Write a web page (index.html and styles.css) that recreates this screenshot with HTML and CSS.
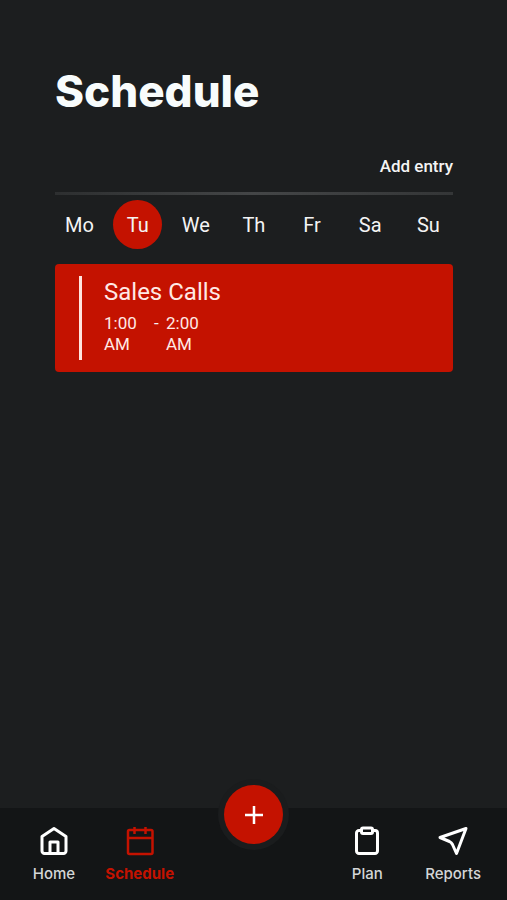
FILE: index.html
```html
<!DOCTYPE html>
<html lang="en">
<head>
<meta charset="utf-8">
<meta name="viewport" content="width=device-width, initial-scale=1">
<title>Schedule</title>
<link rel="stylesheet" href="styles.css">
</head>
<body>
<main class="page">
  <h1 class="title">Schedule</h1>
  <div class="actions"><button class="add-entry" type="button">Add entry</button></div>
  <div class="days">
    <button class="day" type="button"><span class="day-label">Mo</span></button>
    <button class="day" type="button" aria-pressed="true"><span class="day-label day-label-active">Tu</span></button>
    <button class="day" type="button"><span class="day-label">We</span></button>
    <button class="day" type="button"><span class="day-label">Th</span></button>
    <button class="day" type="button"><span class="day-label">Fr</span></button>
    <button class="day" type="button"><span class="day-label">Sa</span></button>
    <button class="day" type="button"><span class="day-label">Su</span></button>
  </div>
  <article class="entry">
    <div class="entry-body">
      <h2 class="entry-title">Sales Calls</h2>
      <div class="entry-time">
        <span class="time">1:00 AM</span>
        <span class="dash">-</span>
        <span class="time">2:00 AM</span>
      </div>
    </div>
  </article>
</main>
<nav class="tabs">
  <a class="tab" href="#home">
    <svg class="icon" viewBox="0 0 32 32" aria-hidden="true"><path d="M4 11.500 16 3.500l12 8V26a2.500 2.500 0 0 1-2.500 2.500h-19A2.500 2.500 0 0 1 4 26zM12 28.500V17h8v11.500"/></svg>
    <span>Home</span>
  </a>
  <a class="tab tab-active" href="#schedule">
    <svg class="icon icon-active" viewBox="0 0 32 32" aria-hidden="true"><rect x="4" y="5" width="24.500" height="24" rx="1.500"/><path d="M4 13h24.500M10.500 2v7M21.500 2v7"/></svg>
    <span>Schedule</span>
  </a>
  <div class="fab-slot"><button class="fab" type="button" aria-label="Add">
    <svg class="plus" viewBox="0 0 20 20" aria-hidden="true"><path d="M10 1v18M1 10h18"/></svg>
  </button></div>
  <a class="tab" href="#plan">
    <svg class="icon" viewBox="0 0 32 32" aria-hidden="true"><path d="M10.500 5.500H8A2.500 2.500 0 0 0 5.500 8v18A2.500 2.500 0 0 0 8 28.500h16a2.500 2.500 0 0 0 2.500-2.500V8A2.500 2.500 0 0 0 24 5.500h-2.500"/><rect x="10.500" y="3" width="11" height="5.500" rx="1.500"/></svg>
    <span>Plan</span>
  </a>
  <a class="tab" href="#reports">
    <svg class="icon" viewBox="0 0 32 32" aria-hidden="true"><path d="M29 3.500 3 12.500 12.500 16.500Q14.500 17.500 15.500 19.500L19.500 28.500z"/></svg>
    <span>Reports</span>
  </a>
</nav>
</body>
</html>
```

FILE: styles.css
```css
* { box-sizing: border-box; }

body {
  margin: 0;
  min-height: 100vh;
  display: flex;
  flex-direction: column;
  background: #1c1e1f;
  color: #f4f4f4;
  font-family: Roboto, sans-serif;
}

button {
  padding: 0;
  border: 0;
  background: none;
  color: inherit;
  font: inherit;
}

.page {
  flex: 1;
  padding: 64px 54px 24px 55px;
}

.title {
  margin: 0;
  color: #f8fcfc;
  font: 800 44px/54px Inter, sans-serif;
}

.actions {
  display: flex;
  justify-content: flex-end;
  padding: 36px 0 14px;
}

.add-entry {
  font-size: 17px;
  font-weight: 500;
  line-height: 24px;
}

.days {
  display: flex;
  margin-right: -9px;
  padding-top: 8px;
  background: linear-gradient(90deg, #2d2f30, #444647 50%, #343637) left top / calc(100% - 9px) 3px no-repeat;
}

.day {
  flex: 1;
  display: flex;
  justify-content: flex-start;
}

.day-label {
  display: grid;
  place-items: center;
  width: 49px;
  height: 49px;
  border-radius: 50%;
  font-size: 20px;
}

.day-label-active { background: #c41200; }

.entry {
  margin-top: 15px;
  padding: 12px 24px;
  border-radius: 4px;
  background: #c41200;
}

.entry-body {
  padding: 1px 0 4px 22px;
  border-left: 3px solid #ffe4df;
}

.entry-title {
  margin: 0 0 5px;
  font-size: 24px;
  font-weight: 400;
  line-height: 31px;
}

.entry-time {
  display: flex;
  padding-bottom: 1px;
  font-size: 17px;
  line-height: 21px;
}

.time { width: 50px; }
.dash { width: 12px; }
.time, .entry-title { color: #ffe9e5; }
.time:first-child { padding-right: 12px; }

.tabs {
  display: grid;
  grid-template-columns: 86fr 86fr 142fr 86fr 86fr;
  padding: 17px 11px 16px;
  background: #131516;
}

.tab {
  display: flex;
  flex-direction: column;
  align-items: center;
  gap: 7px;
  color: #d4d6d7;
  font: 500 15px/20px Inter, sans-serif;
  text-decoration: none;
}

.tab-active {
  color: #c41200;
  font-weight: 700;
}

.icon {
  width: 32px;
  height: 32px;
  fill: none;
  stroke: #fff;
  stroke-width: 3;
  stroke-linejoin: round;
}

.icon-active {
  stroke: #c41200;
  stroke-width: 2.5;
}

.fab-slot {
  position: relative;
}

.fab {
  position: absolute;
  left: 50%;
  bottom: 40px;
  display: grid;
  place-items: center;
  width: 59px;
  height: 59px;
  margin-left: -29px;
  border-radius: 50%;
  background: #c41200;
  box-shadow: 0 0 0 6px #1a1c1d;
}

.plus {
  width: 20px;
  height: 20px;
  stroke: #fff;
  stroke-width: 2.5;
}
```
